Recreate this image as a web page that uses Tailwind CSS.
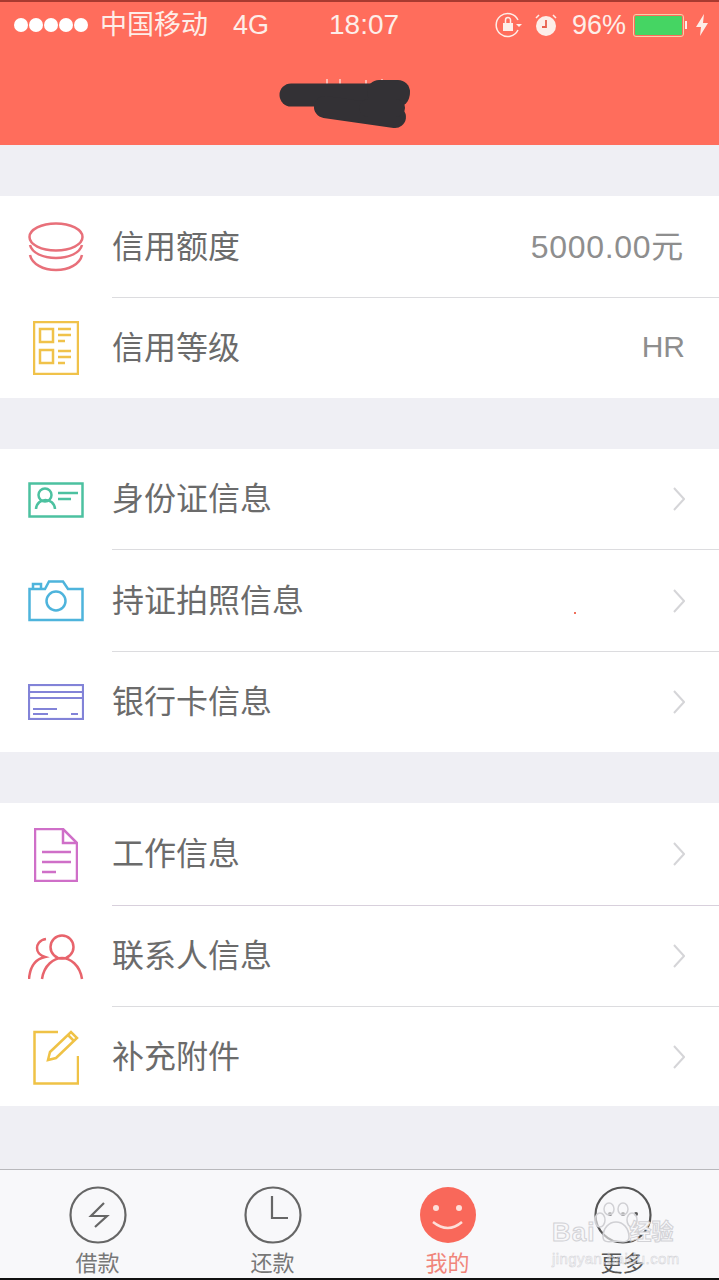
<!DOCTYPE html>
<html lang="en">
<head>
  <meta charset="UTF-8">
  <title>我的</title>
  <script src="https://cdn.jsdelivr.net/npm/@tailwindcss/browser@4"></script>
</head>
<body class="bg-[#efeff4] font-['Liberation_Sans','Noto_Sans_CJK_SC',sans-serif]">
  <div class="relative w-[719px] h-[1280px] overflow-hidden flex flex-col">

    <!-- Header -->
    <header class="relative h-[145px] shrink-0 bg-[#ff6d5c] border-t-2 border-[#a83a30] text-[#fdeee9]">
      <div class="flex items-center h-[46px] pl-[14px] text-[27px]">
        <div class="flex gap-[1px] w-[77px]">
          <span class="w-[14px] h-[14px] rounded-full bg-white"></span>
          <span class="w-[14px] h-[14px] rounded-full bg-white"></span>
          <span class="w-[14px] h-[14px] rounded-full bg-white"></span>
          <span class="w-[14px] h-[14px] rounded-full bg-white"></span>
          <span class="w-[14px] h-[14px] rounded-full bg-white"></span>
        </div>
        <span class="ml-[9px] w-[133px]">中国移动</span>
        <span class="w-[96px]">4G</span>
        <span class="w-[166px] text-[28px]">18:07</span>
        <svg class="w-[28px] h-[28px]" viewBox="0 0 28 28" fill="none" stroke="#fdeee9" stroke-width="1.5">
          <path d="M23 19a11.5 11.5 0 1 1 0-10"/>
          <rect x="8" y="12" width="10" height="8" fill="#fdeee9" stroke="none"/>
          <path d="M10.5 12V9a2.5 2.5 0 0 1 5 0v3"/>
          <path d="M21 13l3 3 3-3" fill="#fdeee9" stroke="none"/>
        </svg>
        <svg class="ml-[12px] w-[22px] h-[24px]" viewBox="0 0 22 24">
          <circle cx="11" cy="13" r="10" fill="#fdeee9"/>
          <path d="M11 7v7H7" fill="none" stroke="#e8604f" stroke-width="1.8"/>
          <path d="M1 5l3-3M21 5l-3-3" stroke="#fdeee9" stroke-width="1.5"/>
        </svg>
        <span class="ml-[15px]">96%</span>
        <div class="ml-[7px] w-[51px] h-[23px] border border-[#f8cfa8] rounded-[3px] p-[1px]">
          <div class="w-full h-full bg-[#45d563] rounded-[1px]"></div>
        </div>
        <span class="w-[2px] h-[8px] bg-[#fdeee9] ml-[1px]"></span>
        <svg class="ml-[9px] w-[12px] h-[22px]" viewBox="0 0 12 22" fill="#fdeee9">
          <path d="M8 0L0 13h5l-1 9 8-13H7z"/>
        </svg>
      </div>
      <!-- title showing above the scribble -->
      <svg class="absolute left-[322px] top-[76px] w-[70px] h-[8px]" viewBox="0 0 70 8" stroke="#fdeee9" stroke-width="1.5" stroke-opacity="0.8">
        <path d="M5 1v7M18 1v7M44 2v6M60 1v7"/>
      </svg>
      <!-- scribbled out title -->
      <svg class="absolute left-[278px] top-[76px] w-[135px] h-[54px]" viewBox="0 0 135 54" fill="none" stroke="#333135" stroke-linecap="round">
        <path d="M13 17H120" stroke-width="23"/>
        <path d="M101 14H120" stroke-width="24"/>
        <path d="M47 29L117 39" stroke-width="22"/>
        <path d="M90 30H118" stroke-width="18"/>
      </svg>
    </header>

    <!-- Menu -->
    <main class="flex-1 pt-[51px] flex flex-col gap-[51px]">
      <section class="bg-white">
        <div class="flex items-center h-[102px]">
          <div class="w-[112px] flex justify-center">
            <svg class="w-[56px] h-[50px]" viewBox="0 0 56 50" fill="none" stroke="#e8707a" stroke-width="2.5">
              <ellipse cx="28" cy="15" rx="26.5" ry="13.5"/>
              <path d="M2 23c2 8 13 13 26 13s24-5 26-13"/>
              <path d="M2 33c2 9 13 15 26 15s24-6 26-15"/>
            </svg>
          </div>
          <div class="flex-1 h-full flex items-center justify-between pr-[35px] border-b border-[#dcdcdf] text-[32px] text-[#6b6b6b]">
            <span>信用额度</span><span class="text-[32px] tracking-[0.7px] text-[#8e8e8e]">5000.00元</span>
          </div>
        </div>
        <div class="flex items-center h-[100px]">
          <div class="w-[112px] flex justify-center">
            <svg class="w-[46px] h-[54px]" viewBox="0 0 46 54" fill="none" stroke="#f0c24a" stroke-width="2.5">
              <rect x="1" y="1" width="44" height="52"/>
              <rect x="7" y="8" width="13" height="13"/>
              <rect x="7" y="29" width="13" height="13"/>
              <path d="M25 8h13M25 14h13M25 20h7M25 30h13M25 36h13M25 42h7"/>
            </svg>
          </div>
          <div class="flex-1 flex items-center justify-between pr-[34px] text-[32px] text-[#6b6b6b]">
            <span>信用等级</span><span class="text-[30px] leading-none -mt-[2px] text-[#8e8e8e]">HR</span>
          </div>
        </div>
      </section>

      <section class="bg-white">
        <div class="flex items-center h-[101px]">
          <div class="w-[112px] flex justify-center">
            <svg class="w-[56px] h-[36px]" viewBox="0 0 56 36" fill="none" stroke="#4cc1a0" stroke-width="2.5">
              <rect x="1.5" y="1.5" width="53" height="33"/>
              <circle cx="17" cy="13" r="6.5"/>
              <path d="M8 27c1-12 18-12 19 0"/>
              <path d="M30 11h20M30 17h13"/>
            </svg>
          </div>
          <div class="flex-1 h-full flex items-center justify-between pr-[34px] border-b border-[#dcdcdf] text-[32px] text-[#6b6b6b]">
            <span>身份证信息</span>
            <svg class="w-[12px] h-[24px]" viewBox="0 0 12 24" fill="none" stroke="#d5d5d8" stroke-width="2"><path d="M1 1l10 11L1 23"/></svg>
          </div>
        </div>
        <div class="relative flex items-center h-[102px]">
          <div class="w-[112px] flex justify-center">
            <svg class="w-[56px] h-[42px]" viewBox="0 0 56 42" fill="none" stroke="#4eb4dc" stroke-width="2.5">
              <path d="M1.5 9h15.5l4-7.5h14l5 7.5h14.5v31H1.5z"/>
              <path d="M5 8V4h8v4"/>
              <circle cx="28" cy="21" r="9.5"/>
            </svg>
          </div>
          <div class="flex-1 h-full flex items-center justify-between pr-[34px] border-b border-[#dcdcdf] text-[32px] text-[#6b6b6b]">
            <span>持证拍照信息</span>
            <svg class="w-[12px] h-[24px]" viewBox="0 0 12 24" fill="none" stroke="#d5d5d8" stroke-width="2"><path d="M1 1l10 11L1 23"/></svg>
          </div>
          <span class="absolute left-[574px] top-[62px] w-[2px] h-[2px] bg-[#f0705c]"></span>
        </div>
        <div class="flex items-center h-[100px]">
          <div class="w-[112px] flex justify-center">
            <svg class="w-[56px] h-[36px]" viewBox="0 0 56 36" fill="none" stroke="#8283d8" stroke-width="2.2">
              <rect x="1" y="1" width="54" height="34"/>
              <path d="M1 8h54M1 14h54"/>
              <path d="M5 25h24M5 30h15M43 30h7"/>
            </svg>
          </div>
          <div class="flex-1 flex items-center justify-between pr-[34px] text-[32px] text-[#6b6b6b]">
            <span>银行卡信息</span>
            <svg class="w-[12px] h-[24px]" viewBox="0 0 12 24" fill="none" stroke="#d5d5d8" stroke-width="2"><path d="M1 1l10 11L1 23"/></svg>
          </div>
        </div>
      </section>

      <section class="bg-white">
        <div class="flex items-center h-[103px]">
          <div class="w-[112px] flex justify-center">
            <svg class="w-[44px] h-[54px]" viewBox="0 0 44 54" fill="none" stroke="#cf6fc8" stroke-width="2.5">
              <path d="M1 1h28l14 14v38H1z"/>
              <path d="M29 1v14h14"/>
              <path d="M8 24h29M8 34h29M8 44h14"/>
            </svg>
          </div>
          <div class="flex-1 h-full flex items-center justify-between pr-[34px] border-b border-[#d8d0dc] text-[32px] text-[#6b6b6b]">
            <span>工作信息</span>
            <svg class="w-[12px] h-[24px]" viewBox="0 0 12 24" fill="none" stroke="#d5d5d8" stroke-width="2"><path d="M1 1l10 11L1 23"/></svg>
          </div>
        </div>
        <div class="flex items-center h-[101px]">
          <div class="w-[112px] flex justify-center">
            <svg class="w-[56px] h-[46px]" viewBox="0 0 56 46" fill="none" stroke="#e8646c" stroke-width="2.5">
              <circle cx="34" cy="13" r="11.5"/>
              <path d="M14 45c2-14 12-21 20-21s18 7 20 21"/>
              <path d="M18 5c-7 1-9 6-9 9s2 7 8 9c-10 2-15 10-16 22"/>
            </svg>
          </div>
          <div class="flex-1 h-full flex items-center justify-between pr-[34px] border-b border-[#dcdcdf] text-[32px] text-[#6b6b6b]">
            <span>联系人信息</span>
            <svg class="w-[12px] h-[24px]" viewBox="0 0 12 24" fill="none" stroke="#d5d5d8" stroke-width="2"><path d="M1 1l10 11L1 23"/></svg>
          </div>
        </div>
        <div class="flex items-center h-[99px]">
          <div class="w-[112px] flex justify-center">
            <svg class="w-[46px] h-[56px]" viewBox="0 0 46 56" fill="none" stroke="#efc246" stroke-width="2.5">
              <path d="M25 3H1.5v51.5H45V27"/>
              <path d="M15 31l2-8L38 3l6 6-21 20z"/>
              <path d="M35 6l6 6"/>
            </svg>
          </div>
          <div class="flex-1 flex items-center justify-between pr-[34px] text-[32px] text-[#6b6b6b]">
            <span>补充附件</span>
            <svg class="w-[12px] h-[24px]" viewBox="0 0 12 24" fill="none" stroke="#d5d5d8" stroke-width="2"><path d="M1 1l10 11L1 23"/></svg>
          </div>
        </div>
      </section>
    </main>

    <!-- Tab bar -->
    <nav class="absolute left-0 bottom-0 w-full h-[111px] pl-[10px] bg-[#f8f8fa] border-t border-[#b8b8bc] border-b-2 border-b-[#111] grid grid-cols-[repeat(4,175px)] text-[22px] text-[#777]">
      <div class="flex flex-col items-center pt-[16px]">
        <svg class="w-[58px] h-[58px]" viewBox="0 0 58 58" fill="none" stroke="#666" stroke-width="2.2">
          <circle cx="29" cy="29" r="27.5"/>
          <path d="M35 17L22 30h16L26 41"/>
        </svg>
        <span class="leading-[30px] mt-[5px]">借款</span>
      </div>
      <div class="flex flex-col items-center pt-[16px]">
        <svg class="w-[58px] h-[58px]" viewBox="0 0 58 58" fill="none" stroke="#666" stroke-width="2.2">
          <circle cx="29" cy="29" r="27.5"/>
          <path d="M28 10v22h16"/>
        </svg>
        <span class="leading-[30px] mt-[5px]">还款</span>
      </div>
      <div class="flex flex-col items-center pt-[16px] text-[#f0857a]">
        <svg class="w-[58px] h-[58px]" viewBox="0 0 58 58">
          <circle cx="29" cy="29" r="28" fill="#f9685a"/>
          <circle cx="17" cy="22" r="3" fill="#fde0da"/>
          <circle cx="40" cy="22" r="3" fill="#fde0da"/>
          <path d="M14 36q15 12 29 0" fill="none" stroke="#fde0da" stroke-width="2.5"/>
        </svg>
        <span class="leading-[30px] mt-[5px]">我的</span>
      </div>
      <div class="flex flex-col items-center pt-[16px] text-[#555]">
        <svg class="w-[58px] h-[58px]" viewBox="0 0 58 58" fill="none" stroke="#555" stroke-width="2.2">
          <circle cx="29" cy="29" r="27.5"/>
          <circle cx="16" cy="28" r="2" fill="#555" stroke="none"/>
          <circle cx="29" cy="28" r="2" fill="#555" stroke="none"/>
          <circle cx="42" cy="28" r="2" fill="#555" stroke="none"/>
        </svg>
        <span class="leading-[30px] mt-[5px]">更多</span>
      </div>
    </nav>

    <!-- Baidu watermark -->
    <svg class="absolute left-[594px] top-[1202px] w-[44px] h-[42px]" viewBox="0 0 44 42" fill="#f8f8fa" fill-opacity="0.6" stroke="#d0d0d4" stroke-width="1.5">
      <ellipse cx="6" cy="18" rx="5" ry="7"/>
      <ellipse cx="15" cy="7" rx="5" ry="6"/>
      <ellipse cx="29" cy="7" rx="5" ry="6"/>
      <ellipse cx="38" cy="18" rx="5" ry="7"/>
      <path d="M9 35c0-9 6-15 13-15s13 6 13 15c0 6-7 5-13 4-6 1-13 2-13-4z"/>
    </svg>
    <div class="absolute left-[552px] top-[1219px] w-[130px] text-[#f8f8fa] [-webkit-text-stroke:1px_#d2d2d6] leading-none">
      <div class="flex items-center text-[26px] font-bold"><span class="tracking-[1px]">Bai</span><span class="ml-[34px] text-[22px]">经验</span></div>
      <div class="text-[15px] mt-[6px] text-transparent [-webkit-text-stroke:0.5px_#d2d2d6] tracking-[0.4px]">jingyan.baidu.com</div>
    </div>
  </div>
</body>
</html>
